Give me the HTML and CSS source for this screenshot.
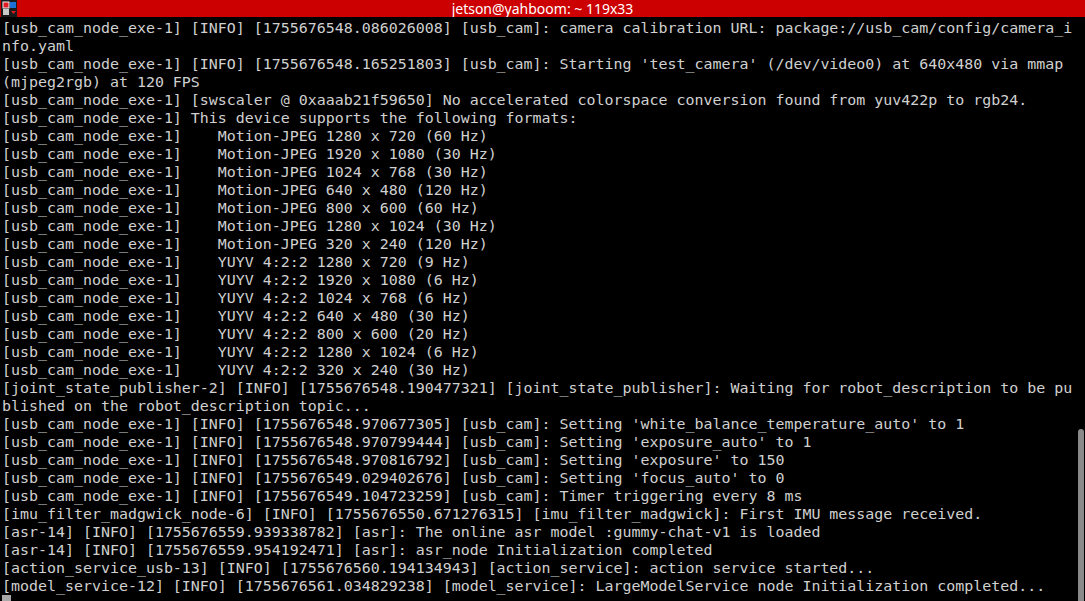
FILE: index.html
```html
<!DOCTYPE html>
<html>
<head>
<meta charset="utf-8">
<link rel="stylesheet" href="styles.css">
</head>
<body>
<div class="window">
  <div class="titlebar">
    <div class="appicon">
      <svg width="16" height="17" viewBox="0 0 16 17">
        <rect x="0" y="0" width="16" height="17" fill="#1a1a1a"/>
        <rect x="2" y="2" width="6" height="6" fill="#e01b24" stroke="#f0f0f0" stroke-width="1"/>
        <rect x="9" y="2" width="6" height="6" fill="#1c71d8"/>
        <rect x="2" y="9" width="6" height="6" fill="#c8c8c8"/>
        <path d="M10 11 L15 11 L12.5 14 Z" fill="#e01b24"/>
      </svg>
    </div>
    <div class="title">jetson@yahboom: ~ 119x33</div>
  </div>
  <div class="terminal">
<div class="row">[usb_cam_node_exe-1] [INFO] [1755676548.086026008] [usb_cam]: camera calibration URL: package://usb_cam/config/camera_i</div>
<div class="row">nfo.yaml</div>
<div class="row">[usb_cam_node_exe-1] [INFO] [1755676548.165251803] [usb_cam]: Starting 'test_camera' (/dev/video0) at 640x480 via mmap</div>
<div class="row">(mjpeg2rgb) at 120 FPS</div>
<div class="row">[usb_cam_node_exe-1] [swscaler @ 0xaaab21f59650] No accelerated colorspace conversion found from yuv422p to rgb24.</div>
<div class="row">[usb_cam_node_exe-1] This device supports the following formats:</div>
<div class="row">[usb_cam_node_exe-1]    Motion-JPEG 1280 x 720 (60 Hz)</div>
<div class="row">[usb_cam_node_exe-1]    Motion-JPEG 1920 x 1080 (30 Hz)</div>
<div class="row">[usb_cam_node_exe-1]    Motion-JPEG 1024 x 768 (30 Hz)</div>
<div class="row">[usb_cam_node_exe-1]    Motion-JPEG 640 x 480 (120 Hz)</div>
<div class="row">[usb_cam_node_exe-1]    Motion-JPEG 800 x 600 (60 Hz)</div>
<div class="row">[usb_cam_node_exe-1]    Motion-JPEG 1280 x 1024 (30 Hz)</div>
<div class="row">[usb_cam_node_exe-1]    Motion-JPEG 320 x 240 (120 Hz)</div>
<div class="row">[usb_cam_node_exe-1]    YUYV 4:2:2 1280 x 720 (9 Hz)</div>
<div class="row">[usb_cam_node_exe-1]    YUYV 4:2:2 1920 x 1080 (6 Hz)</div>
<div class="row">[usb_cam_node_exe-1]    YUYV 4:2:2 1024 x 768 (6 Hz)</div>
<div class="row">[usb_cam_node_exe-1]    YUYV 4:2:2 640 x 480 (30 Hz)</div>
<div class="row">[usb_cam_node_exe-1]    YUYV 4:2:2 800 x 600 (20 Hz)</div>
<div class="row">[usb_cam_node_exe-1]    YUYV 4:2:2 1280 x 1024 (6 Hz)</div>
<div class="row">[usb_cam_node_exe-1]    YUYV 4:2:2 320 x 240 (30 Hz)</div>
<div class="row">[joint_state_publisher-2] [INFO] [1755676548.190477321] [joint_state_publisher]: Waiting for robot_description to be pu</div>
<div class="row">blished on the robot_description topic...</div>
<div class="row">[usb_cam_node_exe-1] [INFO] [1755676548.970677305] [usb_cam]: Setting 'white_balance_temperature_auto' to 1</div>
<div class="row">[usb_cam_node_exe-1] [INFO] [1755676548.970799444] [usb_cam]: Setting 'exposure_auto' to 1</div>
<div class="row">[usb_cam_node_exe-1] [INFO] [1755676548.970816792] [usb_cam]: Setting 'exposure' to 150</div>
<div class="row">[usb_cam_node_exe-1] [INFO] [1755676549.029402676] [usb_cam]: Setting 'focus_auto' to 0</div>
<div class="row">[usb_cam_node_exe-1] [INFO] [1755676549.104723259] [usb_cam]: Timer triggering every 8 ms</div>
<div class="row">[imu_filter_madgwick_node-6] [INFO] [1755676550.671276315] [imu_filter_madgwick]: First IMU message received.</div>
<div class="row">[asr-14] [INFO] [1755676559.939338782] [asr]: The online asr model :gummy-chat-v1 is loaded</div>
<div class="row">[asr-14] [INFO] [1755676559.954192471] [asr]: asr_node Initialization completed</div>
<div class="row">[action_service_usb-13] [INFO] [1755676560.194134943] [action_service]: action service started...</div>
<div class="row">[model_service-12] [INFO] [1755676561.034829238] [model_service]: LargeModelService node Initialization completed...</div>
<div class="row"><span class="cursor"> </span></div>
    <div class="scrollbar"></div>
  </div>
</div>
</body>
</html>
```

FILE: styles.css
```css
html, body {
  margin: 0;
  padding: 0;
  background: #000000;
  overflow: hidden;
}

.window {
  width: 1085px;
  height: 601px;
  display: flex;
  flex-direction: column;
  overflow: hidden;
}

.titlebar {
  height: 17px;
  flex: none;
  background: #cc0000;
  display: flex;
  align-items: center;
  position: relative;
}

.appicon {
  width: 16px;
  height: 17px;
  margin-left: 1px;
  display: flex;
}

.title {
  position: absolute;
  left: 0;
  right: 0;
  top: 0;
  text-align: center;
  color: #ffffff;
  font-family: "Noto Sans", "DejaVu Sans", sans-serif;
  font-size: 14px;
  line-height: 17px;
  padding-left: 0;
  pointer-events: none;
}

.terminal {
  flex: 1;
  position: relative;
  background: #000000;
  color: #d0d0d0;
  font-family: "DejaVu Sans Mono", monospace;
  font-size: 14.95px;
  line-height: 18px;
  padding: 2px 0 0 2px;
  overflow: hidden;
}

.row {
  white-space: pre;
  height: 18px;
}

.cursor {
  display: inline-block;
  width: 9px;
  height: 18px;
  background: #a8a8a8;
  vertical-align: top;
}

.scrollbar {
  position: absolute;
  right: 1px;
  top: 412px;
  width: 6px;
  bottom: 0;
  background: #8a8a8a;
  border-radius: 3px 3px 0 0;
}
```
